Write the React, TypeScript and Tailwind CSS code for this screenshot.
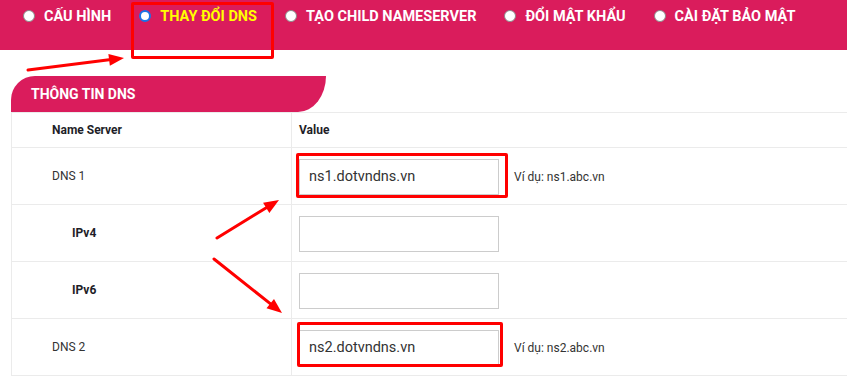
import React from "react";

const tabs = [
  { label: "CẤU HÌNH", active: false },
  { label: "THAY ĐỔI DNS", active: true },
  { label: "TẠO CHILD NAMESERVER", active: false },
  { label: "ĐỔI MẬT KHẨU", active: false },
  { label: "CÀI ĐẶT BẢO MẬT", active: false },
];

function Arrow({ x1, y1, x2, y2 }: { x1: number; y1: number; x2: number; y2: number }) {
  const dx = x2 - x1;
  const dy = y2 - y1;
  const len = Math.sqrt(dx * dx + dy * dy);
  const ux = dx / len;
  const uy = dy / len;
  const hl = 15;
  const hw = 6;
  const bx = x2 - ux * hl;
  const by = y2 - uy * hl;
  const px = -uy;
  const py = ux;
  const pts = `${x2},${y2} ${bx + px * hw},${by + py * hw} ${bx - px * hw},${by - py * hw}`;
  return (
    <g>
      <line x1={x1} y1={y1} x2={bx + ux * 2} y2={by + uy * 2} stroke="#ff0000" strokeWidth={3} strokeLinecap="round" />
      <polygon points={pts} fill="#ff0000" />
    </g>
  );
}

function Row({
  label,
  bold,
  indent,
  value,
  hint,
}: {
  label: string;
  bold?: boolean;
  indent?: boolean;
  value?: string;
  hint?: string;
}) {
  return (
    <div className="flex h-[57px] border-b border-[#ebebeb]">
      <div
        className={`w-[280px] shrink-0 border-r border-[#ebebeb] flex items-center text-[12px] ${
          bold ? "font-bold text-[#1e1e28]" : "text-[#333]"
        } ${indent ? "pl-[60px]" : "pl-[40px]"}`}
      >
        {label}
      </div>
      <div className="flex items-center pl-[7px] pt-[1px]">
        <div className="w-[200px] h-[36px] border border-[#cccccc] bg-white flex items-center pl-[9px] text-[14.5px] text-[#333]">
          {value}
        </div>
        {hint && <span className="ml-[15px] text-[12px] text-[#333]">{hint}</span>}
      </div>
    </div>
  );
}

export default function App() {
  return (
    <div className="relative w-[847px] h-[378px] overflow-hidden bg-white font-['Roboto',sans-serif]">
      <div className="h-[50px] bg-[#da1c5c] flex items-start pt-[9px] pl-[23px] gap-[28px]">
        {tabs.map((t) => (
          <div key={t.label} className="flex items-center gap-[9px] h-[13px]">
            {t.active ? (
              <span className="w-[12px] h-[12px] rounded-full bg-white border-[2px] border-[#1a73e8] shrink-0" />
            ) : (
              <span className="w-[12px] h-[12px] rounded-full bg-white border border-[#8a8a8a] shrink-0" />
            )}
            <span
              className={`text-[14.5px] font-bold leading-none pt-[4px] whitespace-nowrap ${
                t.active ? "text-[#ffff00]" : "text-white"
              }`}
            >
              {t.label}
            </span>
          </div>
        ))}
      </div>

      <div className="pt-[26px] pl-[11px]">
        <div className="w-[315px] h-[36px] bg-[#da1c5c] rounded-tl-[24px] rounded-br-[28px_36px] flex items-center pl-[20px] text-white text-[14px] font-bold">
          THÔNG TIN DNS
        </div>
        <div className="border-l border-t border-[#ebebeb]">
          <div className="flex h-[35px] border-b border-[#ebebeb] text-[12px] font-bold text-[#1e1e28]">
            <div className="w-[280px] shrink-0 border-r border-[#ebebeb] flex items-center pl-[40px]">
              Name Server
            </div>
            <div className="flex items-center pl-[7px]">Value</div>
          </div>
          <Row label="DNS 1" value="ns1.dotvndns.vn" hint="Ví dụ: ns1.abc.vn" />
          <Row label="IPv4" bold indent />
          <Row label="IPv6" bold indent />
          <Row label="DNS 2" value="ns2.dotvndns.vn" hint="Ví dụ: ns2.abc.vn" />
        </div>
      </div>

      {/* annotations */}
      <div className="absolute left-[131px] top-[2px] w-[143px] h-[57px] border-[3px] border-[#ff0000] rounded-[2px]" />
      <div className="absolute left-[296px] top-[153px] w-[212px] h-[45px] border-[3px] border-[#ff0000] rounded-[2px]" />
      <div className="absolute left-[297px] top-[322px] w-[206px] h-[45px] border-[3px] border-[#ff0000] rounded-[2px]" />
      <svg className="absolute left-0 top-0" width={847} height={378}>
        <Arrow x1={28} y1={70} x2={124} y2={58} />
        <Arrow x1={217} y1={238} x2={279} y2={200} />
        <Arrow x1={214} y1={259} x2={282} y2={313} />
      </svg>
    </div>
  );
}
